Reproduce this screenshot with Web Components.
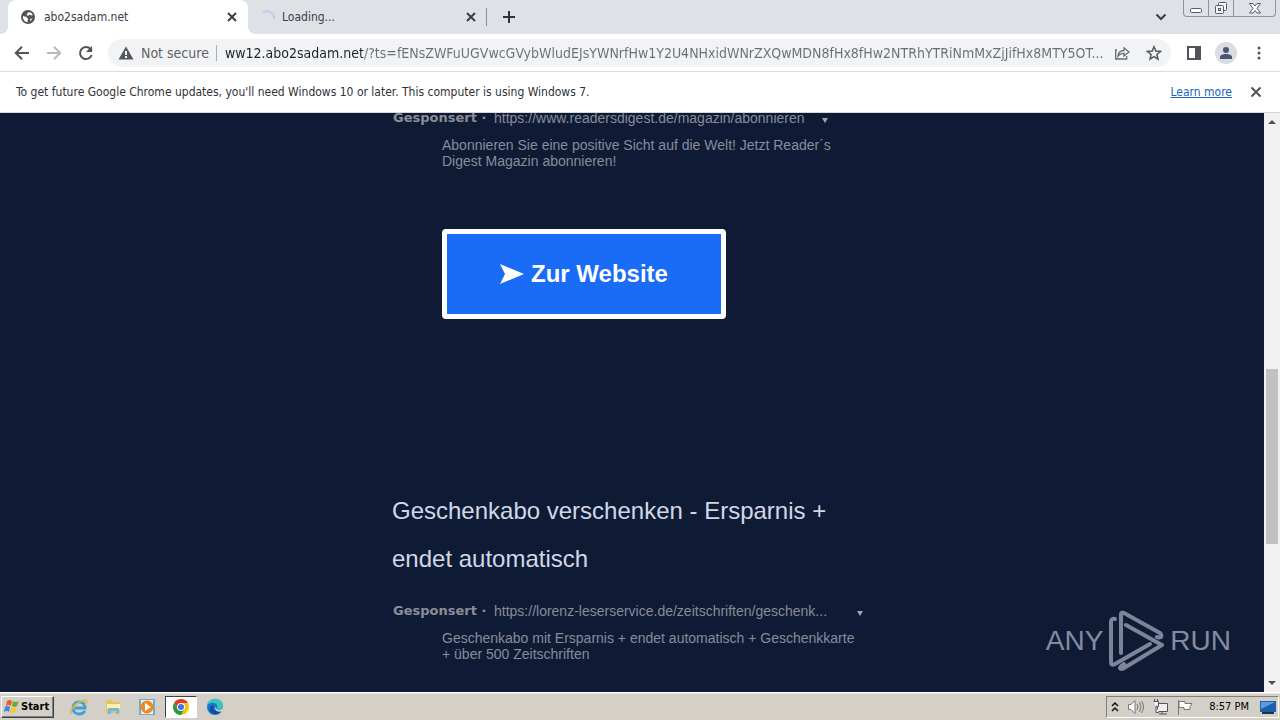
<!DOCTYPE html>
<html lang="en">
<head>
<meta charset="utf-8">
<meta name="viewport" content="width=device-width, initial-scale=1">
<title>abo2sadam.net</title>
<style>
html, body { margin: 0; height: 100%; }
body { --ui: "DejaVu Sans Condensed", "DejaVu Sans", sans-serif; font-family: var(--ui); overflow: hidden; }
</style>
</head>
<body>
<desktop-screen>
  <tab-strip slot="chrome">
    <browser-tab active>abo2sadam.net</browser-tab>
    <browser-tab loading>Loading...</browser-tab>
  </tab-strip>
  <tool-bar slot="chrome"></tool-bar>
  <info-bar slot="chrome">To get future Google Chrome updates, you'll need Windows 10 or later. This computer is using Windows 7.</info-bar>
  <page-view slot="page">
    <sponsored-ad url="https://www.readersdigest.de/magazin/abonnieren">
      Abonnieren Sie eine positive Sicht auf die Welt! Jetzt Reader´s Digest Magazin abonnieren!
      <site-button slot="action">Zur Website</site-button>
    </sponsored-ad>
    <sponsored-ad url="https://lorenz-leserservice.de/zeitschriften/geschenk..." wide>
      <span slot="title">Geschenkabo verschenken - Ersparnis + endet automatisch</span>
      Geschenkabo mit Ersparnis + endet automatisch + Geschenkkarte + über 500 Zeitschriften
    </sponsored-ad>
  </page-view>
  <water-mark slot="mark"></water-mark>
  <task-bar slot="taskbar"></task-bar>
</desktop-screen>
<script>
const define = (name, html, setup) => customElements.define(name, class extends HTMLElement {
  constructor() {
    super();
    this.attachShadow({ mode: 'open' }).innerHTML = '<style>:host,*{box-sizing:border-box}svg{display:block;flex:none}button{border:0;padding:0;background:none;font:inherit;color:inherit}</style>' + html;
  }
  connectedCallback() { if (setup) setup(this, this.shadowRoot); }
});

define('desktop-screen', `
<style>
:host { display: flex; flex-direction: column; height: 100vh; position: relative; background: #0f1b35; }
main { flex: 1; min-height: 0; display: flex; }
::slotted(page-view) { flex: 1; }
::slotted(water-mark) { position: absolute; right: 49px; bottom: 48px; }
</style>
<slot name="chrome"></slot>
<main><slot name="page"></slot></main>
<slot name="mark"></slot>
<slot name="taskbar"></slot>`);

define('tab-strip', `
<style>
:host { display: flex; height: 34px; flex: none; background: #dee1e6; padding-left: 8px; align-items: stretch; color: #3c4043; }
.new { width: 45px; display: grid; place-items: center; border-left: 1px solid #8d9197; height: 18px; margin-top: 8px; }
.grow { flex: 1; }
.search { width: 32px; display: grid; place-items: center; margin-right: 6px; }
.win { display: flex; height: 17px; margin-right: 4px; border: 1px solid #8f939b; border-top: 0; border-radius: 0 0 4px 4px; }
.win button { width: 25px; display: grid; place-items: center; border-right: 1px solid #8f939b; }
.win button:last-child { width: 41px; border: 0; }
</style>
<slot></slot>
<button class="new" aria-label="New tab"><svg width="12" height="12" viewBox="0 0 12 12" stroke="#303338" stroke-width="2"><path d="M6 0v12M0 6h12"/></svg></button>
<div class="grow"></div>
<button class="search" aria-label="Search tabs"><svg width="12" height="8" viewBox="0 0 12 8" fill="none" stroke="#3c4043" stroke-width="2"><path d="M1.5 1.5 6 6l4.500-4.500"/></svg></button>
<div class="win">
  <button aria-label="Minimize"><svg width="14" height="16" viewBox="0 0 14 16" fill="#fff" stroke="#555a66"><rect x="1.500" y="8.500" width="11" height="4" rx="1"/></svg></button>
  <button aria-label="Restore"><svg width="16" height="16" viewBox="0 0 16 16" fill="#f4f5f7" stroke="#555a66"><rect x="5.500" y="2.500" width="8" height="8" rx="1"/><rect x="2.500" y="5.500" width="8" height="8" rx="1"/><rect x="5.500" y="8.500" width="2" height="2"/></svg></button>
  <button aria-label="Close"><svg width="14" height="16" viewBox="0 0 14 16" fill="#fff" stroke="#555a66"><path d="M1.500 3.500h3.500l2 2.500 2-2.500h3.500L9 8.500l3.500 4.500H9l-2-2.500L5 13H1.500L5 8.500z"/></svg></button>
</div>`);

define('browser-tab', `
<style>
:host { display: block; width: 238px; }
.tab { height: 34px; width: 100%; display: flex; align-items: center; padding: 0 8px 0 12px; font-size: 12px; color: #3c4043; position: relative; }
:host([active]) { width: 240px; }
:host([active]) .tab { background: #fff; border-radius: 8px 8px 0 0; padding-right: 9px; }
:host([active]) .tab::before, :host([active]) .tab::after { content: ""; position: absolute; bottom: 0; width: 8px; height: 8px; }
:host([active]) .tab::before { left: -8px; background: radial-gradient(circle at 0 0, transparent 8px, #fff 8px); }
:host([active]) .tab::after { right: -8px; background: radial-gradient(circle at 100% 0, transparent 8px, #fff 8px); }
.title { flex: 1; text-align: left; margin-left: 8px; white-space: nowrap; font: inherit; }
.load { display: none; }
:host([loading]) .load { display: block; }
:host([loading]) .globe { display: none; }
:host([loading]) .title { margin-left: 6px; }
</style>
<div class="tab">
  <svg class="globe" width="16" height="16" viewBox="0 0 16 16"><circle cx="8" cy="8" r="7" fill="#50555b"/><path d="M8 3.500c2-1 4 .4 4.800 2.500l-2 .6-1.200-1-1.600 1.200L6.500 6z M3 7l3 .8 2 2-.6 3.400C4.500 12.600 2.500 10.500 3 7zM10 10l2.500-.6-2 2.800z" fill="#fff"/></svg>
  <svg class="load" width="16" height="16" viewBox="0 0 16 16" fill="none" stroke="#c3cfee" stroke-width="2"><path d="M3 4A6.500 6.500 0 0 1 13.800 10"/></svg>
  <button class="title"><slot></slot></button>
  <button aria-label="Close tab"><svg width="14" height="14" viewBox="0 0 14 14" stroke="#3c4043" stroke-width="2"><path d="m3 3 8 8M11 3l-8 8"/></svg></button>
</div>`);

define('tool-bar', `
<style>
:host { display: flex; height: 38px; flex: none; background: #fff; align-items: center; padding: 0 9px 0 10px; border-bottom: 1px solid #dadce0; }
button { display: grid; place-items: center; width: 24px; height: 24px; margin-right: 8px; }
.omni { flex: 1; min-width: 0; margin: 0 11px 0 2px; height: 28px; border-radius: 14px; background: #f1f3f4; display: flex; align-items: center; padding: 0 5px 0 10px; font-size: 14px; }
label { color: #5f6368; padding: 0 7px 0 7px; white-space: nowrap; border-right: 1px solid #a8abb0; line-height: 16px; }
input { flex: 1; min-width: 0; border: 0; outline: 0; padding: 0; margin: 0 2px 0 8px; font: inherit; height: 20px; color: transparent; background: linear-gradient(90deg, #202124 138px, #6b6f75 138px) text; -webkit-background-clip: text; }
.omni button { margin: 0 0 0 8px; }
.omni button:first-of-type { margin-left: 0; }
.avatar { background: #dadde2; border-radius: 50%; width: 22px; height: 22px; margin: 0 10px 0 9px; }
.side, .menu { margin: 0; }
</style>
<button aria-label="Back"><svg width="16" height="16" viewBox="0 0 16 16" fill="none" stroke="#50545a" stroke-width="2"><path d="M15 8H2M8 1.800 1.800 8 8 14.200"/></svg></button>
<button aria-label="Forward"><svg width="16" height="16" viewBox="0 0 16 16" fill="none" stroke="#b9bbbe" stroke-width="2"><path d="M1 8h13M8 1.800 14.200 8 8 14.200"/></svg></button>
<button aria-label="Reload"><svg width="16" height="16" viewBox="0 0 16 16" fill="none" stroke="#50545a" stroke-width="2"><path d="M13.700 10A6 6 0 1 1 12.500 4L14 5.500"/><path d="M14 1v6H8z" fill="#50545a" stroke="none"/></svg></button>
<div class="omni">
  <svg width="16" height="16" viewBox="0 0 16 16"><path d="M8 1.500 15.500 14.500H.5z" fill="#55595e"/><path d="M7 6h2v4H7zM7 11h2v2H7z" fill="#fff"/></svg>
  <label for="url">Not secure</label>
  <input id="url" type="text" spellcheck="false" readonly value="ww12.abo2sadam.net/?ts=fENsZWFuUGVwcGVybWludEJsYWNrfHw1Y2U4NHxidWNrZXQwMDN8fHx8fHw2NTRhYTRiNmMxZjJifHx8MTY5OT...">
  <button aria-label="Share"><svg width="16" height="16" viewBox="0 0 16 16" fill="none" stroke="#686c72" stroke-width="1.300"><path d="M3 5H1.700v9h11v-3M4 11c.5-4 2.500-5.500 6-5.500V2.800L15 7l-5 4V8.300C7.500 8.300 5.500 9 4 11z"/></svg></button>
  <button aria-label="Bookmark"><svg width="16" height="16" viewBox="0 0 16 16" fill="none" stroke="#55595e" stroke-width="1.500"><path d="m8 1.800 1.800 4.300 4.700.4-3.600 3 1.100 4.600L8 11.600l-4 2.500 1.100-4.600-3.600-3 4.700-.4z"/></svg></button>
</div>
<button class="side" aria-label="Side panel"><svg width="14" height="14" viewBox="0 0 14 14"><path d="M0 0h14v14H0zM2 2v10h6V2z" fill="#50545a" fill-rule="evenodd"/></svg></button>
<button class="avatar" aria-label="Profile"><svg width="14" height="14" viewBox="0 0 14 14" fill="#4a5674"><circle cx="7" cy="4" r="3"/><path d="M1 13v-2c0-4 12-4 12 0v2z"/></svg></button>
<button class="menu" aria-label="Menu"><svg width="4" height="14" viewBox="0 0 4 14" fill="#50545a"><circle cx="2" cy="2" r="1.500"/><circle cx="2" cy="7" r="1.500"/><circle cx="2" cy="12" r="1.500"/></svg></button>`);

define('info-bar', `
<style>
:host { display: flex; height: 41px; flex: none; align-items: center; padding: 0 16px; background: #fff; border-bottom: 1px solid #d5d7da; font-size: 12px; color: #303236; }
p { flex: 1; margin: 0; }
a { color: #1a66b8; margin-right: 16px; }
</style>
<p><slot></slot></p><a href="#">Learn more</a>
<button aria-label="Dismiss"><svg width="16" height="14" viewBox="0 0 16 14" fill="none" stroke="#50545a" stroke-width="2"><path d="m3.500 2.500 9 9m0-9-9 9"/></svg></button>`);

define('page-view', `
<style>
:host { display: flex; min-width: 0; overflow: hidden; background: #0f1b35; font-family: "Liberation Sans", Arial, sans-serif; }
section { flex: 1; min-width: 0; overflow: hidden; }
.col { width: 480px; max-width: 100%; margin: -3px auto 0; display: flex; flex-direction: column; gap: 168px; }
aside { width: 16px; background: #f1f1f1; display: flex; flex-direction: column; align-items: center; flex: none; }
aside svg { margin: 6px 0; }
.before { flex: 239; } .thumb { flex: 175; width: 12px; background: #c1c1c1; } .after { flex: 131; }
</style>
<section><div class="col"><slot></slot></div></section>
<aside aria-label="Scrollbar">
  <svg width="8" height="5" viewBox="0 0 8 5"><path d="M0 5 4 1l4 4z" fill="#505050"/></svg>
  <div class="before"></div><div class="thumb"></div><div class="after"></div>
  <svg width="8" height="5" viewBox="0 0 8 5"><path d="M0 0 4 4l4-4z" fill="#505050"/></svg>
</aside>`);

define('sponsored-ad', `
<style>
:host { display: block; color: #868c9a; font-size: 14px; line-height: 16px; }
h2 { margin: 0 0 20px; font-size: 24px; line-height: 48px; font-weight: 400; color: #d0d8e8; }
.row { display: flex; align-items: center; margin-bottom: 11px; padding-left: 1px; white-space: nowrap; }
strong { font: 700 13px/16px "DejaVu Sans", Verdana, sans-serif; width: 101px; color: #8b8e96; }
a { color: inherit; text-decoration: none; }
button { width: 8px; margin-left: 16px; }
:host([wide]) button { margin-left: 29px; }
p { margin: 0 0 0 50px; max-width: 424px; }
.action { margin: 60px 0 0 50px; display: flex; }
.action[hidden], h2[hidden] { display: none; }
</style>
<h2><slot name="title"></slot></h2>
<div class="row"><strong>Gesponsert ·</strong><a href="#"></a><button aria-label="Info"><svg width="8" height="16" viewBox="0 0 8 16"><path d="M1 8h6l-3 5z" fill="#a0a5af"/></svg></button></div>
<p><slot></slot></p>
<div class="action"><slot name="action"></slot></div>`, (host, root) => {
  root.querySelector('.row a').textContent = host.getAttribute('url');
  root.querySelector('h2').hidden = !host.querySelector('[slot=title]');
  root.querySelector('.action').hidden = !host.querySelector('[slot=action]');
});

define('site-button', `
<style>
:host { display: block; }
button { display: flex; align-items: center; gap: 7px; height: 90px; padding: 0 53px; border: 5px solid #fff; border-radius: 4px; background: #1a6bf5; color: #fff; font-weight: 700; font-size: 24px; line-height: 32px; white-space: nowrap; }
</style>
<button><svg width="24" height="20" viewBox="0 0 24 20"><path d="M0 0 24 10 0 20 5 10z" fill="#fff"/></svg><slot></slot></button>`);

define('water-mark', `
<style>
:host { display: flex; align-items: center; gap: 6px; height: 62px; color: #858b9e; font: 28px/62px "Liberation Sans Narrow", "Arial Narrow", "Liberation Sans", sans-serif; }
</style>
<span>ANY</span>
<svg width="55" height="62" viewBox="0 0 55 62" fill="none" stroke="#7d849a" stroke-width="4" stroke-linejoin="round" stroke-linecap="round"><path d="M12 43V4q0-2 3-1l36 20q2 2 1 4-2 1-4 0"/><path d="M6 9Q2 8 2 12v40q0 4 4 2l35-20"/><path d="M17 15l36 20-38 23q-3 2-4 0 1-2 4-4"/></svg>
<span>RUN</span>`);

define('task-bar', `
<style>
:host { display: flex; align-items: center; height: 28px; flex: none; background: #d4d0c8; border-top: 1px solid #fff; box-shadow: inset 0 1px #e8e5df; font-size: 11px; color: #000; }
.start { display: flex; align-items: center; height: 22px; width: 53px; margin-left: 1px; padding-left: 2px; border: 1px solid; border-color: #fff #404040 #404040 #fff; box-shadow: inset -1px -1px #808080; font-weight: 700; }
nav { display: flex; margin-left: 9px; gap: 2px; }
nav button { width: 32px; height: 22px; display: grid; place-items: center; }
nav .on { background: #fff; border: 1px solid; border-color: #404040 #fff #fff #404040; }
.tray { margin: 0 1px 0 auto; height: 22px; display: flex; align-items: center; border: 1px solid; border-color: #808080 #fff #fff #808080; padding: 0 2px 0 4px; gap: 8px; }
time { margin: 0 3px 0 8px; }
</style>
<button class="start"><svg width="17" height="17" viewBox="0 0 17 17"><path d="M3 3q3-2 5 0L7 8Q5 6 2 8z" fill="#e85d28"/><path d="M9 3q3 2 6 0l-2 5q-2 2-5 0z" fill="#6bab36"/><path d="M1 9q3-2 5 0l-1 5q-2-2-5 0z" fill="#368be2"/><path d="M7 9q3 2 5 0l-1 5q-3 2-5 0z" fill="#fbc530"/></svg>Start</button>
<nav aria-label="Quick launch">
<button aria-label="Internet Explorer"><svg width="18" height="18" viewBox="0 0 18 18" fill="none"><path d="M15 13q-2 3-6 3c-8 0-8-12 0-12 5 0 6 3 6 6H5" stroke="#39a3e0" stroke-width="3"/><path d="M2 15C-1 17 1 9 8 5s11-4 7 2" stroke="#e6b730" stroke-width="1.500"/></svg></button>
<button aria-label="Explorer"><svg width="18" height="18" viewBox="0 0 18 18"><path d="M2 2h6l1 2h7v11H2z" fill="#e5c45f"/><path d="M3 6h13v5H3z" fill="#fff1aa"/><path d="M4 16v-6h11v6h-3v-3H7v3z" fill="#76b7df"/></svg></button>
<button aria-label="Media Player"><svg width="18" height="18" viewBox="0 0 18 18"><path d="M1 1h16v16H1z" fill="#6aaed6"/><path d="M3 2h12v14H3z" fill="#e8f1f7"/><circle cx="9" cy="9" r="6.500" fill="#f48719"/><path d="m7 5 6 4-6 4z" fill="#fff"/></svg></button>
<button class="on" aria-label="Chrome"><svg width="16" height="16" viewBox="0 0 16 16"><circle cx="8" cy="8" r="8" fill="#fbc116"/><path d="M1.100 4A8 8 0 0 1 14.900 4H8L5 10z" fill="#e33b2e"/><path d="M1.100 4A8 8 0 0 0 8 16l3.500-6L8 12 4.500 10z" fill="#279847"/><circle cx="8" cy="8" r="4" fill="#fff"/><circle cx="8" cy="8" r="3" fill="#3878e4"/></svg></button>
<button aria-label="Edge"><svg width="18" height="18" viewBox="0 0 18 18"><circle cx="9" cy="9" r="8" fill="#1475cc"/><path d="M1 8C2-2 17-1 17 8c0 4-5 4-6 2 2-6-7-7-10-2z" fill="#3ac6ba"/><path d="M8 8c-2 3 1 7 7 5-2 4-9 4-11 0-1-3 1-6 4-5z" fill="#0c4f9e"/><path d="M10 8c-1 4 4 5 7 2v3q-6 2-8-2z" fill="#d4d0c8"/></svg></button>
</nav>
<div class="tray">
<svg width="8" height="12" viewBox="0 0 8 12" fill="none" stroke="#111" stroke-width="1.500"><path d="m1 5 3-3 3 3M1 10l3-3 3 3"/></svg>
<svg width="17" height="16" viewBox="0 0 17 16" fill="#fff" stroke="#777"><path d="M1.500 5.500H4l4-4v13l-4-4H1.500z"/><path d="M10 5q2 3 0 6M12.500 3q3 5 0 10M14.500 2q4 6 0 12" fill="none"/></svg>
<svg width="17" height="16" viewBox="0 0 17 16" fill="#eee" stroke="#555"><path d="M5.500 4.500h10v8h-10zM7 15h8M10 13v2"/><path d="M1.500 2.500h5v5H4v6h3M2.500 0v2M5.500 0v2"/></svg>
<svg width="16" height="16" viewBox="0 0 16 16" fill="#fff" stroke="#777"><path d="M1.500 1v15"/><path d="M2 2.500h6v2h7l-2 3 0 3H7v-2H2z"/></svg>
<time>8:57 PM</time>
<svg width="16" height="14" viewBox="0 0 16 14"><path d="M0 1h16v11H0z" fill="#1c5fae"/><path d="M1 2h14L1 9z" fill="#5b9ce0"/><path d="M2 12h12v2H2z" fill="#234"/></svg>
</div>`);
</script>
</body>
</html>
